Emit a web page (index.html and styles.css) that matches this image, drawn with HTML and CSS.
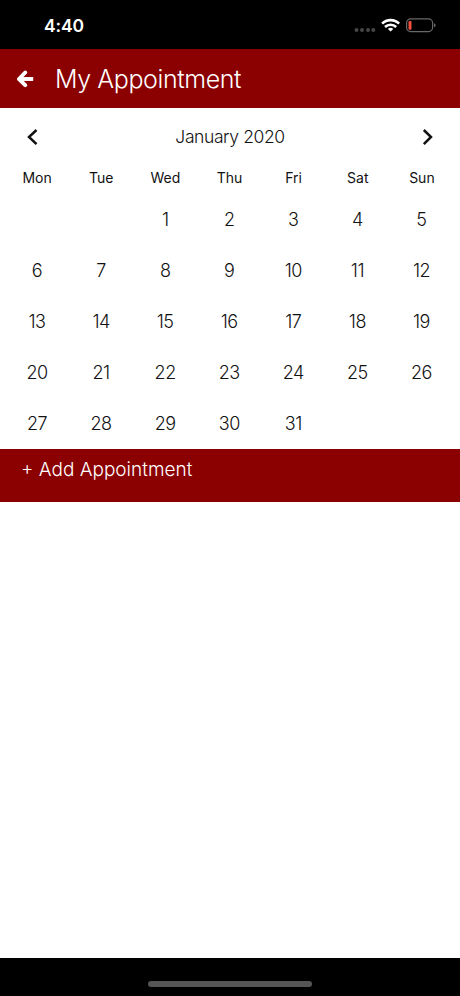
FILE: index.html
```html
<!DOCTYPE html>
<html lang="en">
<head>
<meta charset="utf-8">
<title>My Appointment</title>
<link rel="stylesheet" href="styles.css">
</head>
<body>
<div class="status">
  <span class="time">4:40</span>
  <svg class="status-icons" width="84" height="20" viewBox="0 0 84 20">
    <g fill="#464646"><circle cx="3.500" cy="14" r="2"/><circle cx="9" cy="14" r="2"/><circle cx="15" cy="14" r="2"/><circle cx="20.300" cy="14" r="2"/></g>
    <g fill="none" stroke="#fff" stroke-width="2.600"><path d="M29.100 7.700a12 12 0 0 1 17 0"/><path d="M32 11a8 8 0 0 1 11.200 0"/></g>
    <path d="M37.600 15.500l-2.700-2.600a4 4 0 0 1 5.400 0z" fill="#fff"/>
    <rect x="53.600" y="2.900" width="26" height="12.700" rx="4" fill="none" stroke="#686868" stroke-width="1.200"/>
    <path d="M81 7.300q1.600.5 1.600 2t-1.600 2z" fill="#686868"/>
    <rect x="55.500" y="5" width="3" height="8.700" rx="1" fill="#f4503e"/>
  </svg>
</div>
<header class="header">
  <svg class="back" width="18" height="18" viewBox="0 0 18 18" fill="none" stroke="#fff" stroke-width="3.900" stroke-linejoin="round"><path stroke-linecap="round" d="M9.200 2.500L3 9l6.200 6.200"/><path d="M4 9H17.200"/></svg>
  <h1 class="title">My Appointment</h1>
</header>
<main class="content">
  <div class="month-bar">
    <svg width="12" height="18" viewBox="0 0 12 18" fill="none" stroke="#111" stroke-width="2.500"><path d="M10.500 2L3 9l7.500 7.200"/></svg>
    <span class="month">January 2020</span>
    <svg width="12" height="18" viewBox="0 0 12 18" fill="none" stroke="#111" stroke-width="2.500"><path d="M1.800 2l7.200 7-7.200 7.200"/></svg>
  </div>
  <div class="grid weekdays"><span>Mon</span><span>Tue</span><span>Wed</span><span>Thu</span><span>Fri</span><span>Sat</span><span>Sun</span></div>
  <div class="grid days">
    <span></span><span></span><span>1</span><span>2</span><span>3</span><span>4</span><span>5</span>
    <span>6</span><span>7</span><span>8</span><span>9</span><span>10</span><span>11</span><span>12</span>
    <span>13</span><span>14</span><span>15</span><span>16</span><span>17</span><span>18</span><span>19</span>
    <span>20</span><span>21</span><span>22</span><span>23</span><span>24</span><span>25</span><span>26</span>
    <span>27</span><span>28</span><span>29</span><span>30</span><span>31</span>
  </div>
  <div class="add">+ Add Appointment</div>
</main>
<footer class="home"><div class="home-bar"></div></footer>
</body>
</html>
```
FILE: styles.css
```css
* { box-sizing: border-box; }
body {
  margin: 0;
  height: 996px;
  display: flex;
  flex-direction: column;
  background: #fff;
  color: #111;
  font-family: Inter, "Liberation Sans", sans-serif;
}
.status {
  height: 49px;
  background: #000;
  color: #fff;
  display: flex;
  justify-content: space-between;
  align-items: center;
  padding: 2px 24px 0 44px;
}
.time { font-size: 17.5px; font-weight: 600; letter-spacing: -0.15px; }
.status-icons { margin-right: -1px; }
.header {
  height: 59px;
  background: #8b0000;
  color: #fff;
  display: flex;
  align-items: center;
  padding: 1px 16px 0;
  gap: 21px;
}
.title { margin: 0; font-size: 25px; font-weight: 350; letter-spacing: -0.4px; white-space: nowrap; }
.content { flex: 1; }
.month-bar {
  height: 58px;
  display: flex;
  align-items: center;
  justify-content: space-between;
  padding: 0 26px;
}
.month { font-size: 17.5px; font-weight: 300; letter-spacing: -0.4px; padding-bottom: 2px; }
.grid { display: grid; grid-template-columns: repeat(7, 1fr); padding: 0 5.5px; }
.grid span { display: flex; align-items: center; justify-content: center; }
.weekdays { height: 28px; padding: 0 6px 6px 5px; font-size: 14px; }
.days { grid-auto-rows: 51px; padding: 0 6.5px 0 5px; font-size: 18px; font-weight: 300; letter-spacing: -0.5px; }
.add {
  height: 53px;
  background: #8b0000;
  color: #fff;
  font-size: 19px;
  font-weight: 350;
  letter-spacing: 0;
  line-height: 24px;
  padding: 9px 21px;
}
.home { height: 38px; background: #000; display: flex; justify-content: center; padding-top: 23px; }
.home-bar { width: 164px; height: 6px; border-radius: 3px; background: #555; }
```
